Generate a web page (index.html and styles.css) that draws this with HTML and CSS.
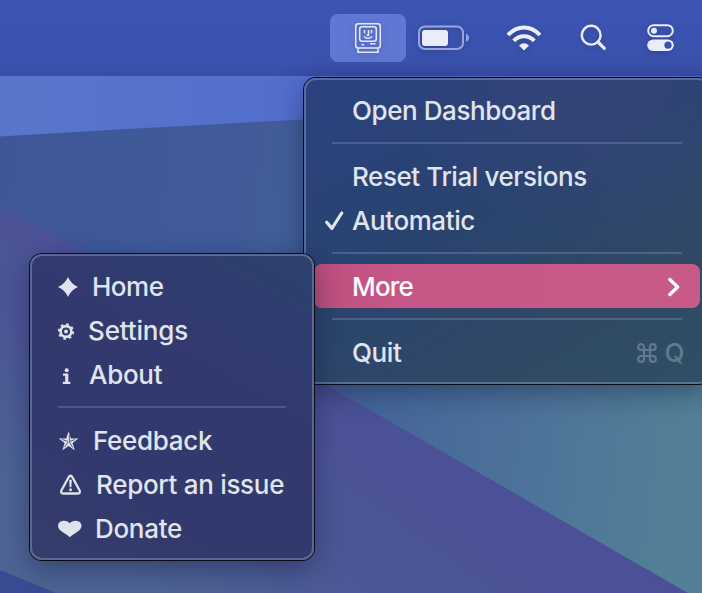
FILE: index.html
```
<!DOCTYPE html>
<html lang="en">
<head>
<meta charset="utf-8">
<title>Menu bar</title>
<link rel="stylesheet" href="styles.css">
</head>
<body>
<main class="desktop">
  <svg class="wallpaper" viewBox="0 0 702 593" preserveAspectRatio="none" aria-hidden="true">
    <defs>
      <linearGradient id="sky"><stop offset="0" stop-color="#5877ca"/><stop offset=".45" stop-color="#526dcd"/><stop offset="1" stop-color="#5270d0"/></linearGradient>
      <linearGradient id="teal" gradientUnits="userSpaceOnUse" x1="0" y1="300" x2="702" y2="390"><stop offset="0" stop-color="#3e5799"/><stop offset=".32" stop-color="#415b99"/><stop offset=".58" stop-color="#466899"/><stop offset=".82" stop-color="#4e7699"/><stop offset="1" stop-color="#538096"/></linearGradient>
      <linearGradient id="violet" gradientUnits="userSpaceOnUse" x1="130" y1="570" x2="330" y2="290"><stop offset="0" stop-color="#4e6493"/><stop offset=".35" stop-color="#4c5796"/><stop offset="1" stop-color="#4b4e98"/></linearGradient>
    </defs>
    <rect width="702" height="593" fill="url(#sky)"/>
    <path d="M0 136.500Q150 127 304 119.500L702 100V593H0Z" fill="url(#teal)"/>
    <path d="M0 204.500L88 252L330 387L688 593H0Z" fill="url(#violet)"/>
    <path d="M0 570L56 593H0Z" fill="#394c93"/>
  </svg>

  <header class="menubar">
    <div class="status active">
      <svg width="28" height="32" viewBox="0 0 28 32" fill="none" stroke="#e4e9fa" stroke-width="1.500">
        <rect x="1.700" y="1.700" width="24.600" height="24.300" rx="2.500"/>
        <rect x="5.700" y="4.800" width="16.600" height="14.400" rx="2.500"/>
        <path d="M10.500 8v3.200M17.500 8v3.200M14.500 8v5.200h-2M9.800 14.500q4.200 3.400 8.400 0M7.500 22.800h2.500M16 21.800h5.500M4 26v4.300h20V26"/>
      </svg>
    </div>
    <svg class="battery" width="52" height="26" viewBox="0 0 52 26">
      <rect x="1" y="1.500" width="44" height="22.500" rx="6" fill="none" stroke="#97a5db" stroke-width="2"/>
      <rect x="4" y="5" width="26" height="16" rx="3" fill="#e9edf8"/>
      <path d="M48 8.800q3 1 3 4t-3 4z" fill="#97a5db"/>
    </svg>
    <svg class="wifi" width="36" height="28" viewBox="0 0 36 28" fill="none" stroke="#ebeffb" stroke-width="4">
      <path d="M2 11Q9 3.400 18 3.400T34 11M7.700 16.800Q12 12.200 18 12.200T28.300 16.800"/>
      <path d="M13 21.500Q18 16.800 23 21.500L18 26.400Z" fill="#ebeffb" stroke="none"/>
    </svg>
    <svg class="search" width="28" height="28" viewBox="0 0 28 28" fill="none" stroke="#e9edfa">
      <circle cx="11.200" cy="11.200" r="9.400" stroke-width="2.400"/>
      <path d="M18 18l6.300 6.300" stroke-width="3.200" stroke-linecap="round"/>
    </svg>
    <svg class="control" width="28" height="28" viewBox="0 0 28 28">
      <rect x="1.200" y="1.200" width="24.600" height="11" rx="5.500" fill="none" stroke="#e9edfa" stroke-width="2"/>
      <circle cx="7" cy="6.700" r="3" fill="#e9edfa"/>
      <rect x=".2" y="15.500" width="26.600" height="11.500" rx="5.750" fill="#e9edfa"/>
      <circle cx="21" cy="21.200" r="3.600" fill="#3b52ad"/>
    </svg>
  </header>

  <nav class="menu main-menu">
    <div class="item">Open Dashboard</div>
    <hr class="rule">
    <div class="item">Reset Trial versions</div>
    <div class="item checked">
      <svg class="check" width="22" height="22" viewBox="0 0 22 22" fill="none" stroke="#e2e5ee" stroke-width="3.200" stroke-linecap="round" stroke-linejoin="round"><path d="M2.700 12.200L7.900 18.400L17.800 3"/></svg>
      Automatic
    </div>
    <hr class="rule">
    <div class="item selected">More
      <svg class="chevron" width="14" height="22" viewBox="0 0 14 22" fill="none" stroke="#fff" stroke-width="3.400" stroke-linecap="round" stroke-linejoin="round"><path d="M2.800 3.500L10.700 11L2.800 18.500"/></svg>
    </div>
    <hr class="rule">
    <div class="item">Quit
      <span class="shortcut">
        <svg width="20" height="20" viewBox="0 0 20 20" fill="none" stroke="currentColor" stroke-width="2.200"><path d="M7 7H4.100A2.900 2.900 0 1 1 7 4.100V15.900A2.900 2.900 0 1 1 4.100 13H15.900A2.900 2.900 0 1 1 13 15.900V4.100A2.900 2.900 0 1 1 15.900 7Z"/></svg>
        <span>Q</span>
      </span>
    </div>
  </nav>

  <nav class="menu sub-menu">
    <div class="item i-home">
      <svg width="20" height="22" viewBox="0 0 20 22"><path d="M10 1Q13 8 20 11Q13 14 10 21Q7 14 0 11Q7 8 10 1Z"/></svg>
      Home</div>
    <div class="item i-settings">
      <svg width="16" height="22" viewBox="0 0 16 22" fill="none" stroke="#e0e2ec"><circle cx="8" cy="11.500" r="5.400" stroke-width="2.600"/><circle cx="8" cy="11.500" r="7.200" stroke-width="2" stroke-dasharray="2.600 3.055"/><circle cx="8" cy="11.500" r="2" fill="#e0e2ec" stroke="none"/></svg>
      Settings</div>
    <div class="item i-about">
      <svg width="16" height="22" viewBox="0 0 16 22"><circle cx="8.700" cy="6.200" r="2"/><path d="M5 9.500h5.300v8.300h2V20H4.800v-2.200h2.400v-6.100H5z"/></svg>
      About</div>
    <hr class="rule">
    <div class="item i-feedback">
      <svg width="22" height="22" viewBox="0 0 22 22"><path d="M10.600 1.500L13 8.400L20.500 8.500L14.600 12.900L16.800 20.300L10.600 16L4.400 20.300L6.600 12.900L.7 8.500L8.200 8.400Z"/><path d="M11.400 5V11.500L17 9.600M11.400 12L14.800 17.500M10.200 12.200L6.300 17.200M10 11.400L4 9.500" stroke="#333a6d" stroke-width=".8" fill="none"/></svg>
      Feedback</div>
    <div class="item i-report">
      <svg width="24" height="22" viewBox="0 0 24 22"><path d="M10.600 3.300Q12.500.2 14.400 3.300L21.600 16.400Q22.800 19.500 19.800 19.500H5.200Q2.200 19.500 3.400 16.400Z" fill="none" stroke="#e0e2ec" stroke-width="2.300"/><path d="M11.200 5.700h2.600l-.4 7.500h-1.800z"/><circle cx="12.500" cy="15.700" r="1.500"/></svg>
      Report an issue</div>
    <div class="item i-donate">
      <svg width="24" height="22" viewBox="0 0 24 22"><path d="M11.800 19.300Q9.700 17 5.500 14.700Q0 11.600 0 7.800Q.2 3 5.500 2.700Q10 2.600 11.800 5.500Q13.600 2.600 18 2.700Q23.300 3 23.500 7.800Q23.500 11.600 18 14.700Q13.900 17 11.800 19.300Z"/></svg>
      Donate</div>
  </nav>
</main>
</body>
</html>
```
FILE: styles.css
```
* { box-sizing: border-box; }
body { margin: 0; font-family: Inter, "Liberation Sans", sans-serif; }
.desktop { position: relative; width: 702px; height: 593px; overflow: hidden; }
.wallpaper { position: absolute; inset: 0; width: 100%; height: 100%; }

.menubar {
  position: relative;
  display: flex;
  align-items: center;
  height: 76px;
  padding-left: 330px;
  background: linear-gradient(#3c54b3, #3b53ae 80%, #384da4);
}
.menubar svg { flex: none; filter: drop-shadow(0 2px 3px rgba(20, 30, 90, .3)); }
.status {
  display: flex;
  align-items: center;
  justify-content: center;
  width: 76px;
  height: 48px;
  border-radius: 8px;
}
.active { background: #6078d4; }
.battery { margin-left: 12px; }
.wifi { margin-left: 36px; }
.search { margin-left: 38px; }
.control { margin-left: 39px; }

.menu {
  position: absolute;
  padding: 10px;
  border-radius: 12px;
  color: #e0e4ed;
}
.menu::after {
  content: "";
  position: absolute;
  inset: 0;
  border: 2px solid rgba(160, 171, 199, .4);
  border-radius: 12px;
  pointer-events: none;
}
.main-menu {
  left: 304px;
  top: 78px;
  width: 406px;
  height: 306px;
  background:
    radial-gradient(ellipse 190px 160px at 70% 0, rgba(58, 68, 122, .7), transparent),
    linear-gradient(150deg, #2b427e 5%, #294370 40%, #304965 75%, #2e5063);
  box-shadow: 0 0 0 1px #080d1c, 0 8px 28px rgba(12, 22, 50, .42);
}
.sub-menu {
  left: 30px;
  top: 254px;
  width: 284px;
  height: 306px;
  background: linear-gradient(210deg, #2c416d, #32396e 36%, #32396d 75%, #343e6b);
  box-shadow: 0 0 0 1px #090c18, 0 8px 28px rgba(12, 18, 50, .42);
}
.item {
  display: flex;
  align-items: center;
  height: 44px;
  padding: 2px 16px 0 38px;
  border-radius: 8px;
  font-size: 26px;
  font-weight: 450;
  letter-spacing: -.42px;
  line-height: 42px;
  white-space: nowrap;
}
.item svg { flex: none; fill: #e0e2ec; }
.item svg[fill="none"] { fill: none; }
.rule { height: 2px; margin: 10px 18px; border: 0; background: rgba(150, 163, 198, .3); }
.checked { padding-left: 10px; }
.check { margin-right: 6px; }
.selected { background: linear-gradient(90deg, #bd4f7f, #c65686 20%, #c85a88); color: #fff; font-weight: 500; letter-spacing: -.8px; }
.chevron { margin-left: auto; margin-right: 3px; }
.shortcut { display: flex; align-items: center; gap: 7px; margin-left: auto; color: #62788e; }
.sub-menu .item { padding-left: 18px; letter-spacing: -.3px; }
.sub-menu .rule { margin: 10px 18px; }
.i-home svg { margin-right: 14px; }
.sub-menu .i-home { letter-spacing: -.5px; }
.i-settings svg { margin-right: 14px; }
.sub-menu .i-settings { letter-spacing: -.15px; }
.i-about svg { margin-right: 15px; }
.i-feedback svg { margin-right: 13px; }
.i-report svg { margin-right: 14px; }
.i-donate svg { margin-right: 13px; }
```
